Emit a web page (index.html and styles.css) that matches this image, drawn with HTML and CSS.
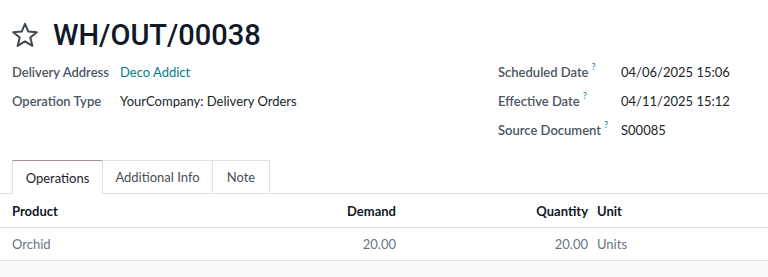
FILE: index.html
```html
<!DOCTYPE html>
<html>
<head>
<meta charset="utf-8">
<link rel="stylesheet" href="styles.css">
</head>
<body>
<div class="sheet">
  <div class="title-row">
    <svg class="star" width="28" height="26" viewBox="0 0 28 26"><path d="M14 1.8 L17.3 9.6 L25.8 10.2 L19.3 15.6 L21.4 23.9 L14 19.4 L6.6 23.9 L8.7 15.6 L2.2 10.2 L10.7 9.6 Z" fill="none" stroke="#3f4753" stroke-width="2" stroke-linejoin="round"/></svg>
    <h1 class="title">WH/OUT/00038</h1>
  </div>
  <div class="fields">
    <div class="group">
      <div class="field"><span class="label">Delivery Address</span><span class="value link">Deco Addict</span></div>
      <div class="field"><span class="label">Operation Type</span><span class="value">YourCompany: Delivery Orders</span></div>
    </div>
    <div class="group right">
      <div class="field"><span class="label">Scheduled Date<sup class="help">?</sup></span><span class="value">04/06/2025 15:06</span></div>
      <div class="field"><span class="label">Effective Date<sup class="help">?</sup></span><span class="value">04/11/2025 15:12</span></div>
      <div class="field"><span class="label">Source Document<sup class="help">?</sup></span><span class="value">S00085</span></div>
    </div>
  </div>
  <div class="tabs">
    <div class="tab active">Operations</div>
    <div class="tab">Additional Info</div>
    <div class="tab">Note</div>
  </div>
  <div class="table">
    <div class="row head">
      <div class="c-product">Product</div>
      <div class="c-demand">Demand</div>
      <div class="c-qty">Quantity</div>
      <div class="c-unit">Unit</div>
    </div>
    <div class="row data">
      <div class="c-product">Orchid</div>
      <div class="c-demand">20.00</div>
      <div class="c-qty">20.00</div>
      <div class="c-unit">Units</div>
    </div>
  </div>
  <div class="footer"></div>
</div>
</body>
</html>
```
FILE: styles.css
```css
html, body {
  margin: 0;
  padding: 0;
  background: #ffffff;
}
body {
  font-family: Lato, "Liberation Sans", sans-serif;
  font-size: 13px;
  color: #212529;
  width: 768px;
  height: 277px;
  overflow: hidden;
}
.sheet {
  display: flex;
  flex-direction: column;
}
.title-row {
  display: flex;
  align-items: center;
  padding: 19px 0 0 11px;
  height: 32px;
}
.star {
  display: block;
  margin-right: 14px;
}
.title {
  margin: 0;
  font-family: Roboto, "Noto Sans", sans-serif;
  font-size: 29px;
  font-weight: 500;
  color: #111827;
  line-height: 32px;
}
.fields {
  display: flex;
  padding: 6px 0 0 12px;
}
.group {
  width: 486px;
  display: flex;
  flex-direction: column;
}
.group.right {
  width: 270px;
}
.field {
  display: flex;
  height: 29px;
  align-items: center;
}
.label {
  width: 108px;
  color: #4b5563;
  font-weight: 600;
}
.right .label {
  width: 123px;
}
.value {
  color: #212529;
}
.value.link {
  color: #017e84;
}
.help {
  color: #3b82a6;
  font-size: 9px;
  margin-left: 3px;
  vertical-align: 7px;
  line-height: 0;
}
.tabs {
  display: flex;
  margin-top: 16px;
  padding-left: 12px;
  border-bottom: 1px solid #dee2e6;
  height: 33px;
}
.tab {
  display: flex;
  align-items: center;
  justify-content: center;
  height: 32px;
  border: 1px solid #dee2e6;
  border-bottom: none;
  margin-left: -1px;
  color: #495057;
}
.tab:nth-child(1) { width: 89px; margin-left: 0; }
.tab:nth-child(2) { width: 109px; }
.tab:nth-child(3) { width: 56px; }
.tab.active {
  border-top: 1px solid #a78ba0;
  background: #fff;
  color: #212529;
  height: 33px;
  margin-bottom: -1px;
}
.row {
  display: flex;
  align-items: center;
  border-bottom: 1px solid #dee2e6;
  padding-left: 12px;
}
.row.head {
  height: 33px;
  font-weight: 700;
  color: #111827;
}
.row.data {
  height: 32px;
  color: #6b7280;
}
.c-product { width: 264px; }
.c-demand { width: 120px; text-align: right; }
.c-qty { width: 192px; text-align: right; }
.c-unit { padding-left: 9px; }
.footer {
  background: #f9fafb;
  height: 20px;
}
```
